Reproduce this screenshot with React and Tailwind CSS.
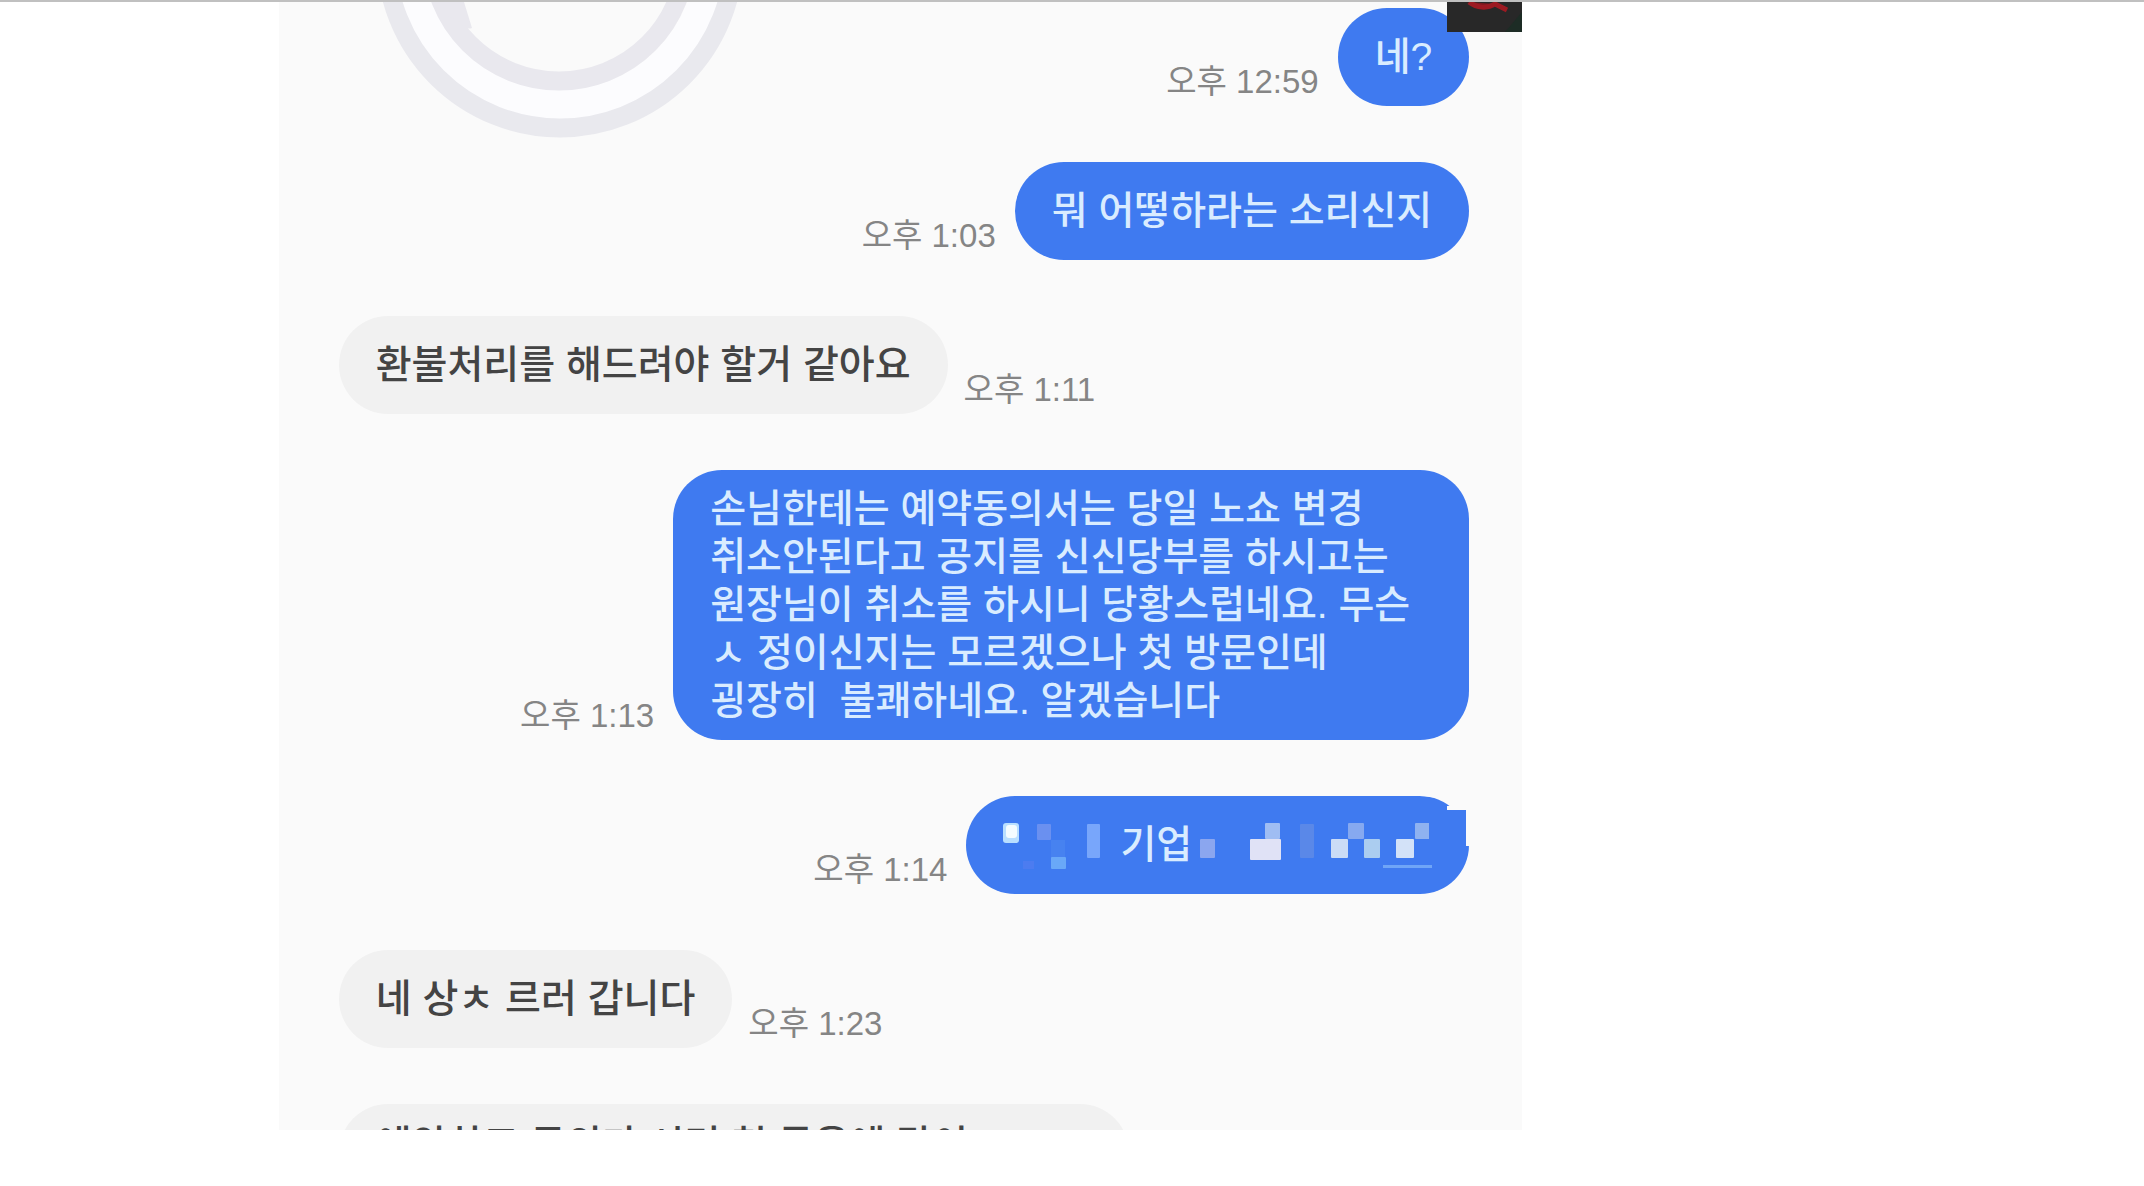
import React from 'react';

const messages = [
  { id: 1, mine: true, time: '오후 12:59', lines: ['네?'] },
  { id: 2, mine: true, time: '오후 1:03', lines: ['뭐 어떻하라는 소리신지'] },
  { id: 3, mine: false, time: '오후 1:11', lines: ['환불처리를 해드려야 할거 같아요'] },
  {
    id: 4,
    mine: true,
    time: '오후 1:13',
    lines: [
      '손님한테는 예약동의서는 당일 노쇼 변경',
      '취소안된다고 공지를 신신당부를 하시고는',
      '원장님이 취소를 하시니 당황스럽네요. 무슨',
      'ㅅ 정이신지는 모르겠으나 첫 방문인데',
      '굉장히  불쾌하네요. 알겠습니다',
    ],
  },
  { id: 5, mine: true, time: '오후 1:14', masked: true, lines: ['기업'] },
  { id: 6, mine: false, time: '오후 1:23', lines: ['네 상ㅊ 르러 갑니다'] },
];

// Large ring logo behind the top of the conversation
function RingLogo() {
  return (
    <svg className="absolute top-0 left-[90px] w-[380px] h-[150px]" viewBox="0 0 380 150" fill="none" aria-hidden="true">
      <circle cx="191" cy="-48" r="151" stroke="#fcfcfe" strokeWidth="30" />
      <circle cx="191" cy="-48" r="174" stroke="#e9e9ee" strokeWidth="19" />
      <circle cx="190" cy="-48" r="127" stroke="#e9e8ee" strokeWidth="19" />
      <path d="M67 0h28l8 26c-6 2-10-2-14-8-10-2-18-8-22-18z" fill="#e9e8ee" />
    </svg>
  );
}

function CornerThumbnail() {
  return (
    <svg className="absolute top-0 right-0 w-[75px] h-[30px]" viewBox="0 0 75 30" aria-hidden="true">
      <rect width="75" height="30" fill="#282828" />
      <path d="M58 30l17-20v20z" fill="#1d2c25" />
      <path d="M22 0c8 6 18 7 26 2z" fill="#7a1a20" />
      <path d="M22 0c8 6 18 7 26 2M46 1l14 7" stroke="#9c1a22" strokeWidth="5" fill="none" />
    </svg>
  );
}

function MaskedText({ text }) {
  return (
    <div className="flex items-center">
      <svg className="w-[117px] h-[48px]" viewBox="0 0 117 48" aria-hidden="true">
        <rect x="0" y="2" width="16" height="20" rx="3" fill="#b9dfff" />
        <rect x="3" y="4" width="11" height="13" rx="3" fill="#f4fcff" />
        <rect x="20" y="40" width="11" height="8" fill="#4c7cf0" />
        <rect x="34" y="3" width="14" height="16" rx="1" fill="#6a90f0" />
        <rect x="48" y="19" width="14" height="18" fill="#4782f0" />
        <rect x="48" y="36" width="15" height="12" rx="1" fill="#69a8f8" />
        <rect x="84" y="3" width="13" height="34" rx="1" fill="#78a6fb" />
      </svg>
      <p>{text}</p>
      <svg className="w-[240px] h-[48px]" viewBox="0 0 240 48" aria-hidden="true">
        <rect x="8" y="18" width="15" height="19" rx="1" fill="#8ba6ef" />
        <rect x="58" y="18" width="31" height="21" rx="1" fill="#e0e2f6" />
        <rect x="73" y="2" width="15" height="16" rx="1" fill="#9fbdf3" />
        <rect x="108" y="3" width="14" height="34" rx="1" fill="#5a88e8" />
        <rect x="139" y="18" width="17" height="19" rx="1" fill="#cbdcf6" />
        <rect x="156" y="2" width="16" height="16" rx="1" fill="#86a9f0" />
        <rect x="172" y="18" width="16" height="19" rx="1" fill="#abcdf0" />
        <rect x="204" y="18" width="18" height="19" rx="1" fill="#d3e2f8" />
        <rect x="223" y="2" width="15" height="16" rx="1" fill="#8fb2f0" />
        <rect x="191" y="44" width="49" height="3" fill="#6fa5f7" />
      </svg>
      {/* chipped top right corner left by the mask */}
      <svg className="absolute top-0 right-0 w-[50px] h-[98px]" viewBox="0 0 50 98" aria-hidden="true">
        <path d="M0 0h50v50h-3V14H28v-4h5C28 4 14 0 0 0z" fill="#fafafa" />
        <path d="M10 14h37v36H10z" fill="#3f7af0" />
      </svg>
    </div>
  );
}

function Message({ message }) {
  const { mine, time, masked, lines } = message;

  return (
    <li className={`flex items-end ${mine ? 'flex-row-reverse gap-[19px]' : 'gap-[16px]'}`}>
      <div
        className={`relative flex flex-col justify-center min-h-[98px] rounded-[49px] px-[37px] py-[15px] text-[39px] leading-[48px] font-medium whitespace-pre ${
          mine ? 'bg-[#3f7af0] text-[#d9ecff]' : 'bg-[#f1f1f1] text-[#444444]'
        } ${lines.length > 1 ? 'w-[796px]' : ''}`}
      >
        {masked ? <MaskedText text={lines[0]} /> : lines.map((line) => <p key={line}>{line}</p>)}
      </div>
      <time className="text-[33px] leading-[48px] text-[#858585] whitespace-nowrap">{time}</time>
    </li>
  );
}

export default function App() {
  return (
    <div className="border-t-2 border-[#c0c0c0] bg-white font-['Liberation_Sans','Noto_Sans_CJK_KR',sans-serif]">
      <main className="relative ml-[13%] w-[58%] bg-[#fafafa] overflow-hidden">
        <RingLogo />
        <ul className="flex flex-col gap-[56px] pl-[60px] pr-[53px] pt-[6px]">
          {messages.map((message) => (
            <Message key={message.id} message={message} />
          ))}
          {/* next message, only its top edge scrolled into view */}
          <li className="h-[26px] overflow-hidden">
            <p className="w-[790px] h-[98px] rounded-t-[49px] bg-[#f1f1f1] px-[37px] py-[17px] text-[39px] leading-[48px] font-medium text-[#444444] whitespace-nowrap">
              예약하고 동의가 시면 첫 들음에 많이 ㅅ ㅅ
            </p>
          </li>
        </ul>
        <CornerThumbnail />
      </main>
    </div>
  );
}
